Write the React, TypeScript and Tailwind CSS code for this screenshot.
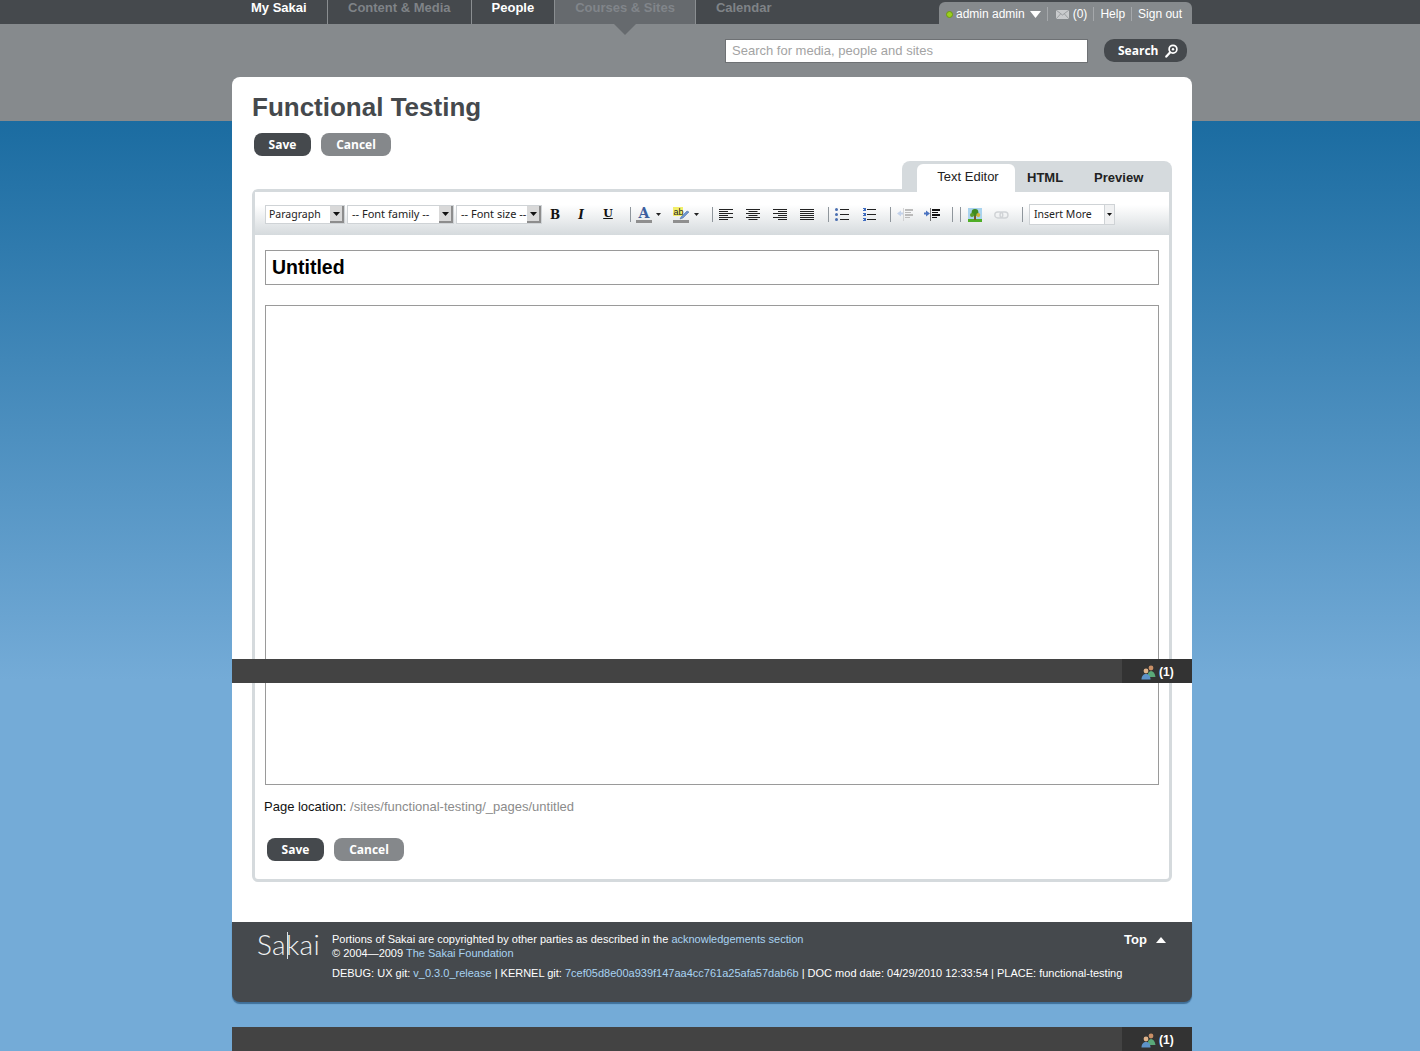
import React from "react";

const sans = "font-['Liberation_Sans',Arial,sans-serif]";
const btnFont = "font-['Open_Sans',sans-serif]";
const tbFont = "font-['Noto_Sans',sans-serif]";

const navItems = [
  { label: "My Sakai", cls: "text-white pl-[19px] pr-[20px] w-[95px]" },
  { label: "Content & Media", cls: "text-[#7f8387] px-5 border-l border-[#8a8e91]" },
  { label: "People", cls: "text-white px-5 border-l border-[#8a8e91]" },
  { label: "Courses & Sites", cls: "text-[#81858a] px-5 border-l border-[#8a8e91] bg-[#666a6e] relative" },
  { label: "Calendar", cls: "text-[#7f8387] px-5 border-l border-[#8a8e91]" },
];

const Sep = ({ className = "" }: { className?: string }) => (
  <span className={`block h-[15px] w-px bg-[#8f969c] ${className}`} />
);

const Caret = () => (
  <svg width="5" height="3" viewBox="0 0 5 3" className="ml-[4px]">
    <path d="M0 0h5L2.5 3z" fill="#222" />
  </svg>
);

const Select = ({ label, w, textCls }: { label: string; w: string; textCls: string }) => (
  <div className={`flex h-[19px] items-center justify-between border border-[#cfd3d6] bg-white pl-[3px] ${w}`}>
    <span className={`whitespace-nowrap text-[#222] ${textCls}`}>{label}</span>
    <span className="flex h-[17px] w-[14px] items-center justify-center border-r-2 border-b-2 border-[#8d8d8d] bg-[#d9d9d9]">
      <svg width="7" height="4" viewBox="0 0 7 4">
        <path d="M0 0h7L3.5 4z" fill="#111" />
      </svg>
    </span>
  </div>
);

const Align = ({ mode }: { mode: "left" | "center" | "right" | "full" }) => {
  const rows = [14, 9, 14, 9, 14, 9];
  return (
    <svg width="14" height="11" viewBox="0 0 14 11" className="block">
      {rows.map((w, i) => {
        const width = mode === "full" ? 14 : w;
        const x = mode === "center" ? (14 - width) / 2 : mode === "right" ? 14 - width : 0;
        return <rect key={i} x={x} y={i * 2} width={width} height="1" fill="#222" />;
      })}
    </svg>
  );
};

const Bullets = () => (
  <svg width="14" height="13" viewBox="0 0 14 13" className="block">
    {[1, 6, 11].map((y) => (
      <g key={y}>
        <circle cx="1.5" cy={y + 0.5} r="1.5" fill="#4a6fb0" />
        <rect x="5" y={y} width="9" height="1" fill="#222" />
      </g>
    ))}
  </svg>
);

const Numbers = () => (
  <svg width="14" height="13" viewBox="0 0 14 13" className="block">
    {[1, 6, 11].map((y) => (
      <g key={y}>
        <rect x="1" y={y - 1} width="3" height="1" fill="#3f6cc0" />
        <rect x="2" y={y} width="2" height="1" fill="#3f6cc0" />
        <rect x="1" y={y + 1} width="3" height="1" fill="#3f6cc0" />
        <rect x="5" y={y} width="9" height="1" fill="#222" />
      </g>
    ))}
  </svg>
);

const Indent = ({ dim }: { dim?: boolean }) => {
  const ink = dim ? "#bbb" : "#111";
  return (
    <svg width="16" height="13" viewBox="0 0 16 13" className="block">
      <path
        d={dim ? "M0 5.5L4 2.5v2h2v2H4v2z" : "M6 5.5L2 2.5v2H0v2h2v2z"}
        fill={dim ? "#c3d2ea" : "#4a73c0"}
      />
      <rect x="6" y="0" width="1" height="13" fill={ink} opacity={0.55} />
      <rect x="8" y="1" width="8" height="2" fill={ink} />
      <rect x="8" y="4" width="6" height="1" fill={ink} />
      <rect x="8" y="6" width="8" height="2" fill={ink} />
      <rect x="8" y="9" width="5" height="1" fill={ink} />
    </svg>
  );
};

const TreeImage = () => (
  <svg width="14" height="14" viewBox="0 0 14 14" className="block">
    <rect width="14" height="14" fill="#a9d3ee" />
    <rect y="11" width="14" height="3" fill="#4fae27" />
    <rect x="6" y="7" width="2" height="5" fill="#7a5a2a" />
    <circle cx="7" cy="4.5" r="3.4" fill="#3f8a22" />
    <circle cx="4" cy="7" r="2" fill="#5a9e2a" />
    <circle cx="10.3" cy="7" r="2" fill="#d0b43a" />
  </svg>
);

const LinkIcon = () => (
  <svg width="15" height="8" viewBox="0 0 15 8" fill="none" stroke="#d0d3d6" strokeWidth="1.4" className="block">
    <rect x="0.8" y="1" width="8" height="6" rx="3" />
    <rect x="6" y="1" width="8" height="6" rx="3" />
  </svg>
);

const People = () => (
  <svg width="15" height="15" viewBox="0 0 15 15" className="block">
    <circle cx="10" cy="3" r="2.4" fill="#c98f66" />
    <path d="M6.5 12c0-4 1.5-6 3.5-6s4 2 4.5 6z" fill="#5aa878" />
    <circle cx="5" cy="6" r="2.4" fill="#e0b48c" />
    <path d="M0.5 14.5c0-3.5 2-5.5 4.5-5.5s4.5 2 4.5 5.5z" fill="#5d93c9" />
  </svg>
);

const PresenceBar = ({ className = "" }: { className?: string }) => (
  <div className={`flex h-6 w-[960px] justify-end bg-[#434343] ${sans} ${className}`}>
    <div className="flex w-[70px] items-center gap-[3px] bg-[#333333] pt-[2px] pl-[19px] text-xs font-bold text-white">
      <People />
      <span>(1)</span>
    </div>
  </div>
);

const Buttons = ({ className = "" }: { className?: string }) => (
  <div className={`flex gap-[10px] ${btnFont} ${className}`}>
    <button className="h-[23px] w-[57px] rounded-lg bg-[#45494d] text-xs font-bold text-white">Save</button>
    <button className="h-[23px] w-[70px] rounded-lg bg-[#85888b] text-xs font-bold text-white">Cancel</button>
  </div>
);

export default function App() {
  return (
    <div className={`relative h-[1051px] overflow-hidden bg-[linear-gradient(#1b6ca1_121px,#74abd7_680px)] ${sans}`}>
      <header className="h-[121px] bg-[#868a8d]">
        <div className="h-6 bg-[#45494d]">
          <div className="ml-[232px] flex h-6 w-[960px] items-stretch justify-between">
            <nav className="flex">
              {navItems.map((item) => (
                <div key={item.label} className={`h-6 text-[13px] leading-[15px] font-bold whitespace-nowrap ${item.cls}`}>
                  {item.label}
                  {item.label === "Courses & Sites" && (
                    <svg width="22" height="11" viewBox="0 0 22 11" className="absolute top-6 left-[59px]">
                      <path d="M0 0h22L11 11z" fill="#666a6e" />
                    </svg>
                  )}
                </div>
              ))}
            </nav>
            <div className="mt-[2px] flex h-[22px] w-[253px] items-center rounded-t-md bg-[#868a8d] pt-[2px] pl-[7px] text-xs text-white">
              <span className="h-[7px] w-[7px] rounded-full border border-[#6b9a10] bg-[#9ccf1e]" />
              <span className="ml-[3px]">admin admin</span>
              <svg width="11" height="7" viewBox="0 0 11 7" className="ml-[5px]">
                <path d="M0 0h11L5.5 7z" fill="#fff" />
              </svg>
              <span className="ml-[6px] h-[14px] w-px bg-[#a5a8ab]" />
              <svg width="13" height="9" viewBox="0 0 13 9" className="ml-[8px]">
                <rect width="13" height="9" fill="#c9cbcd" />
                <path d="M0 0l6.5 5L13 0M0 9l4.5-5M13 9L8.5 4" fill="none" stroke="#8f9396" strokeWidth="0.8" />
              </svg>
              <span className="ml-[4px]">(0)</span>
              <span className="ml-[6px] h-[14px] w-px bg-[#a5a8ab]" />
              <span className="ml-[6px]">Help</span>
              <span className="ml-[6px] h-[14px] w-px bg-[#a5a8ab]" />
              <span className="ml-[6px]">Sign out</span>
            </div>
          </div>
        </div>
        <div className="mt-[15px] ml-[725px] flex items-start">
          <div className="flex h-6 w-[363px] items-center border border-[#6e7174] bg-white pl-[6px] text-[13px] text-[#a3a3a3]">
            Search for media, people and sites
          </div>
          <button className={`ml-4 flex h-[23px] w-[83px] items-center rounded-[10px] bg-[#45494d] pl-[14px] text-xs font-bold text-white ${btnFont}`}>
            Search
            <svg width="13" height="14" viewBox="0 0 13 14" fill="none" className="ml-[7px]">
              <circle cx="8" cy="5.2" r="3.9" stroke="#fff" strokeWidth="1.7" />
              <circle cx="8" cy="5.2" r="1.2" fill="#fff" />
              <path d="M5 8.4L1.3 12.6" stroke="#fff" strokeWidth="2.2" strokeLinecap="round" />
            </svg>
          </button>
        </div>
      </header>

      <main className="relative -mt-[44px] ml-[232px] w-[960px]">
        <div className="rounded-t-lg bg-white pt-[14px] pr-5 pb-10 pl-5">
          <h1 className="text-[26px] leading-[33px] font-bold text-[#45494d]">Functional Testing</h1>
          <Buttons className="mt-[9px] ml-[2px]" />
          <div className="relative z-10 mt-[5px] -mb-[3px] flex justify-end">
            <div className="flex h-[31px] w-[270px] rounded-t-lg bg-[#d5dadd] pt-[3px] pl-[15px] text-[13px]">
              <div className="h-7 w-[98px] rounded-t-md bg-white pt-[3px] pl-[4px] text-center text-[#222]">Text Editor</div>
              <div className="ml-3 pt-[4px] font-bold text-[#222]">HTML</div>
              <div className="ml-[31px] pt-[4px] font-bold text-[#222]">Preview</div>
            </div>
          </div>
          <section className="rounded-md rounded-tr-none border-[3px] border-[#d5dadd] pb-[18px]">
            <div className={`flex h-[43px] items-center bg-[linear-gradient(#ffffff_30%,#d5dadd)] pt-[2px] pl-[10px] ${tbFont}`}>
              <div className="flex gap-[2px]">
                <Select label="Paragraph" w="w-[80px]" textCls="text-[10.5px]" />
                <Select label="-- Font family --" w="w-[107px]" textCls="ml-[1px] text-[11px]" />
                <Select label="-- Font size --" w="w-[86px]" textCls="ml-[1px] text-[11px]" />
              </div>
              <span className="ml-[8px] w-[10px] text-center font-['DejaVu_Serif',serif] text-xs font-bold text-[#111]">B</span>
              <span className="ml-[16px] w-[10px] text-center font-['DejaVu_Serif',serif] text-xs font-bold text-[#111] italic">I</span>
              <span className="ml-[17px] w-[10px] text-center font-['DejaVu_Serif',serif] text-[11px] font-bold text-[#111] underline">U</span>
              <Sep className="ml-[17px]" />
              <div className="ml-[5px] flex items-center">
                <div className="flex w-[16px] flex-col items-center">
                  <span className="font-['DejaVu_Serif',serif] text-[14px] leading-[12px] font-bold text-[#3d5f9e]">A</span>
                  <span className="mt-[1px] h-[3px] w-full bg-[#8f8f8f]" />
                </div>
                <Caret />
              </div>
              <div className="ml-[12px] flex items-center">
                <svg width="17" height="16" viewBox="0 0 17 16" className="block">
                  <rect x="0" y="0" width="10" height="9" fill="#f2ee6a" />
                  <path d="M8 10l6-6 2 1-6 6-3 1z" fill="#6f95d0" stroke="#40689f" strokeWidth="0.5" />
                  <rect x="0" y="13" width="16" height="3" fill="#8f8f8f" />
                  <text x="0.5" y="8" fontSize="9" fontFamily="Liberation Sans" fill="#222">ab</text>
                </svg>
                <Caret />
              </div>
              <Sep className="ml-[13px]" />
              <div className="ml-[6px] flex gap-[13px]">
                <Align mode="left" />
                <Align mode="center" />
                <Align mode="right" />
                <Align mode="full" />
              </div>
              <Sep className="ml-[14px]" />
              <span className="ml-[6px]"><Bullets /></span>
              <span className="ml-[13px]"><Numbers /></span>
              <Sep className="ml-[14px]" />
              <span className="ml-[6px]"><Indent dim /></span>
              <span className="ml-[11px]"><Indent /></span>
              <Sep className="ml-[12px]" />
              <Sep className="ml-[7px]" />
              <span className="ml-[7px]"><TreeImage /></span>
              <span className="ml-[12px]"><LinkIcon /></span>
              <Sep className="ml-[13px]" />
              <div className="ml-[6px] flex h-[21px] w-[86px] items-center justify-between border border-[#cfd3d6] bg-white pl-[4px] text-[10.5px] text-[#222]">
                Insert More
                <span className="flex h-full w-[10px] items-center justify-center border-l border-[#cfd3d6] bg-[#f0f1f2]">
                  <svg width="5" height="3" viewBox="0 0 5 3">
                    <path d="M0 0h5L2.5 3z" fill="#111" />
                  </svg>
                </span>
              </div>
            </div>
            <div className="px-[10px] pt-[15px]">
              <div className="flex h-[35px] items-center border border-[#9a9a9a] pl-[6px] text-[19.5px] font-bold text-black">Untitled</div>
              <div className="mt-5 h-[480px] border border-[#9a9a9a] bg-white" />
              <p className="mt-[14px] -ml-px text-[13px] leading-[16px] text-[#111]">
                Page location: <span className="text-[#8b8b8b]">/sites/functional-testing/_pages/untitled</span>
              </p>
              <Buttons className="mt-[23px] ml-[2px]" />
            </div>
          </section>
        </div>

        <footer className="relative flex h-[80px] rounded-b-lg bg-[#45494d] shadow-[0_2px_1px_#3f6f99] text-[11px] leading-[14px] text-white">
          <div className="relative ml-[25px] w-[75px] pt-[3px] font-['Lato',sans-serif] text-[28px] leading-[38px] font-light tracking-[0.3px] text-[#f0f2f3]">
            Sakai
            <span className="absolute top-[10px] left-[30px] h-[27px] w-px bg-[#dfe2e4]" />
          </div>
          <div className="pt-[10px]">
            <p>
              Portions of Sakai are copyrighted by other parties as described in the{" "}
              <span className="text-[#a9d3f2]">acknowledgements section</span>
            </p>
            <p>
              © 2004—2009 <span className="text-[#a9d3f2]">The Sakai Foundation</span>
            </p>
            <p className="mt-[6px] whitespace-nowrap">
              DEBUG: UX git: <span className="text-[#a9d3f2]">v_0.3.0_release</span> | KERNEL git:{" "}
              <span className="text-[#a9d3f2]">7cef05d8e00a939f147aa4cc761a25afa57dab6b</span> | DOC mod date: 04/29/2010 12:33:54 | PLACE: functional-testing
            </p>
          </div>
          <div className="absolute top-[11px] left-[892px] flex items-center gap-[9px] text-[13px] font-bold">
            Top
            <svg width="10" height="6" viewBox="0 0 10 6">
              <path d="M5 0l5 6H0z" fill="#fff" />
            </svg>
          </div>
        </footer>

        <PresenceBar className="mt-[25px]" />
      </main>

      <PresenceBar className="absolute top-[659px] left-[232px]" />
    </div>
  );
}
